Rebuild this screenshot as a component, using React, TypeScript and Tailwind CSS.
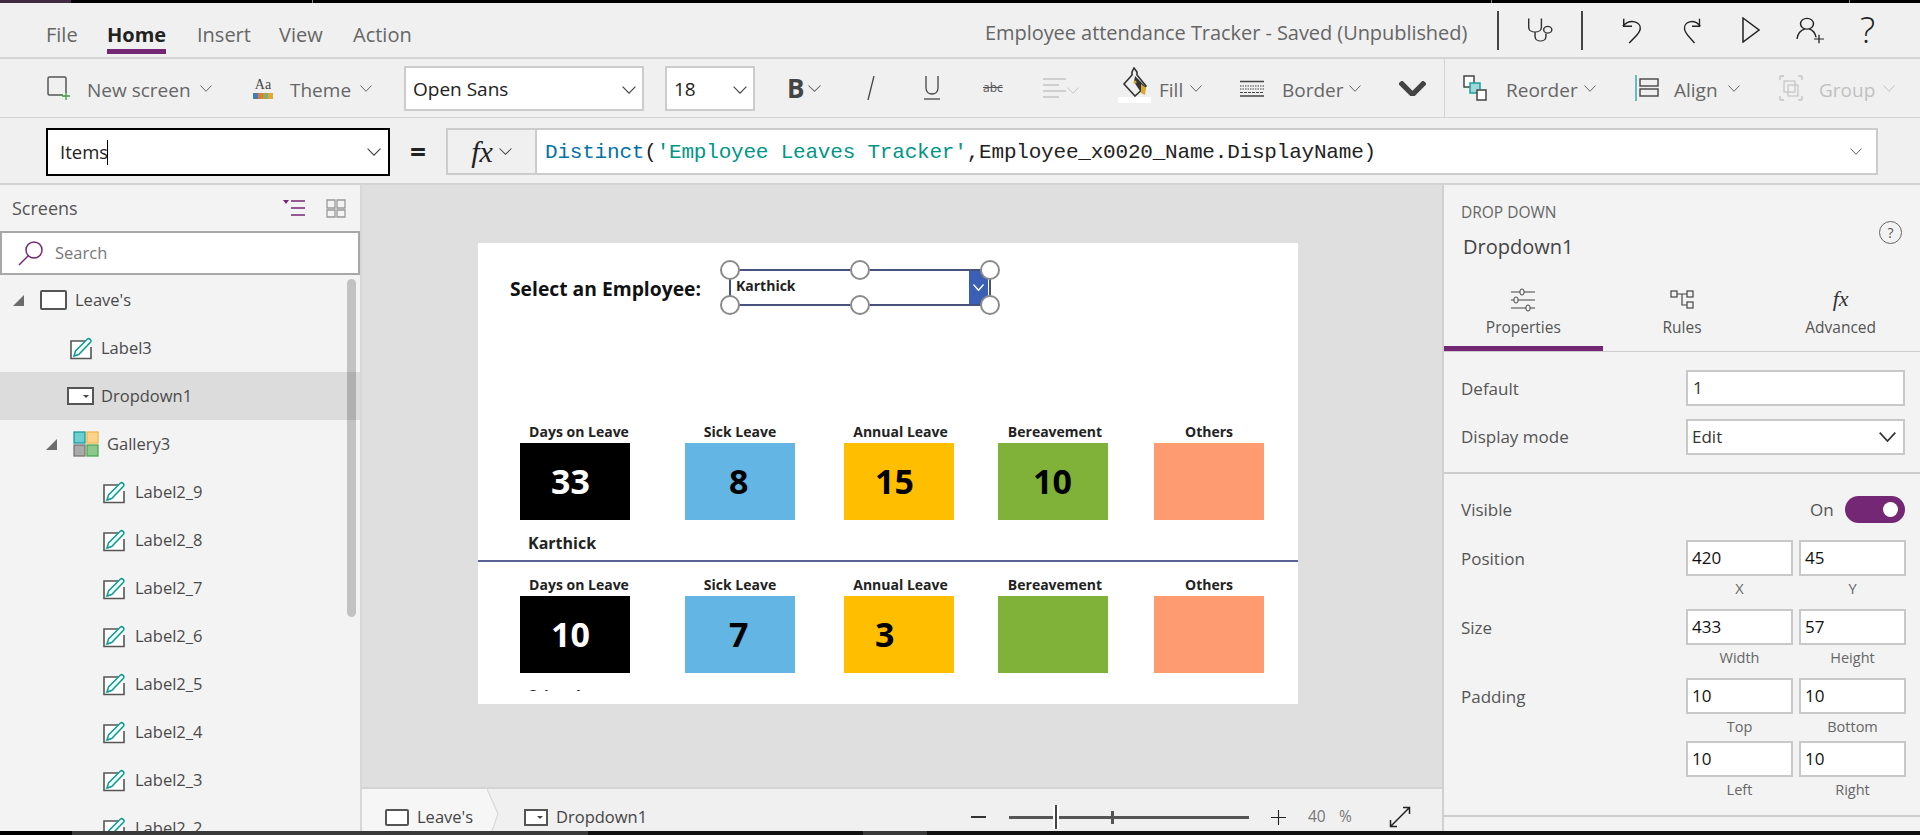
import React from 'react';

const Chev = ({ w = 12, h = 7, c = '#666', sw = 1 }: { w?: number; h?: number; c?: string; sw?: number }) => (
  <svg width={w} height={h} viewBox="0 0 12 7" preserveAspectRatio="none" className="shrink-0">
    <path d="M0.5 0.5 L6 6.3 L11.5 0.5" fill="none" stroke={c} strokeWidth={sw} />
  </svg>
);

const NewScreenIcon = () => (
  <svg width="26" height="26" viewBox="0 0 26 26" className="shrink-0">
    <path d="M20 18 V3.5 a1.5 1.5 0 0 0 -1.5 -1.5 H3.5 A1.5 1.5 0 0 0 2 3.5 V18.5 A1.5 1.5 0 0 0 3.5 20 H17" fill="none" stroke="#555" strokeWidth="1.5" />
    <path d="M20 17 V25 M16 21 H24" stroke="#3c9e3c" strokeWidth="1.3" />
  </svg>
);

const ThemeIcon = () => (
  <div className="flex w-[20px] flex-col items-center shrink-0">
    <span className="font-['Liberation_Serif',serif] text-[14px] leading-[15px] text-[#444]">Aa</span>
    <div className="mt-[1px] flex h-[6px] w-[20px]">
      <span className="flex-1 bg-[#3f7fb5]" />
      <span className="flex-1 bg-[#e07b39]" />
      <span className="flex-1 bg-[#8fae5d]" />
      <span className="flex-1 bg-[#e0a83c]" />
    </div>
  </div>
);

const FillIcon = () => (
  <div className="flex w-[33px] flex-col items-center shrink-0 -mt-[6px]">
    <svg width="26" height="30" viewBox="0 0 26 30">
      <path d="M12 1 L15 5 L15 8 L24 19 L13 29 L2 17 L10 8 L10 5 Z" fill="#f0f0f0" stroke="#333" strokeWidth="1.6" />
      <path d="M13 9 L23 19 L18 24 L12 15 Z" fill="#333" />
      <path d="M19 17 L24 21 L23 28 L19 26 Z" fill="#d7a92c" />
      <circle cx="13" cy="15" r="1.6" fill="#d7a92c" />
    </svg>
    <span className="h-[6px] w-[33px] bg-white" />
  </div>
);

const BorderIcon = () => (
  <svg width="24" height="17" viewBox="0 0 24 17" className="shrink-0">
    <path d="M0 1.5 H24" stroke="#444" strokeWidth="1.5" />
    <path d="M0 6 H24 M0 9 H24" stroke="#444" strokeWidth="1" strokeDasharray="1.5 1" />
    <path d="M0 12.5 H24" stroke="#444" strokeWidth="1" strokeDasharray="3 1" />
    <path d="M0 16 H24" stroke="#444" strokeWidth="1.5" />
  </svg>
);

const ReorderIcon = () => (
  <svg width="24" height="26" viewBox="0 0 24 26" className="shrink-0">
    <rect x="1" y="1" width="10" height="11" fill="#fff" stroke="#444" strokeWidth="1.5" />
    <rect x="7" y="8" width="10" height="10" fill="#9fd8d8" stroke="#1f9e9e" strokeWidth="1.5" />
    <rect x="14" y="15" width="9" height="10" fill="#fff" stroke="#444" strokeWidth="1.5" />
  </svg>
);

const AlignIcon = () => (
  <svg width="24" height="26" viewBox="0 0 24 26" className="shrink-0">
    <path d="M1 0 V26" stroke="#1f9e9e" strokeWidth="1.3" />
    <rect x="5" y="4" width="18" height="7" fill="none" stroke="#444" strokeWidth="1.4" />
    <rect x="5" y="14" width="18" height="7" fill="none" stroke="#444" strokeWidth="1.4" />
  </svg>
);

const GroupIcon = () => (
  <svg width="24" height="26" viewBox="0 0 24 26" className="shrink-0">
    <path d="M1 1 H5 M1 1 V5 M23 1 H19 M23 1 V5 M1 25 H5 M1 25 V21 M23 25 H19 M23 25 V21" stroke="#c4c4c4" strokeWidth="1.4" />
    <rect x="5" y="6" width="11" height="11" fill="none" stroke="#c4c4c4" strokeWidth="1.2" />
    <rect x="9" y="10" width="10" height="11" fill="none" stroke="#c4c4c4" strokeWidth="1.2" />
  </svg>
);

const Stethoscope = () => (
  <svg width="29" height="27" viewBox="0 0 32 36" preserveAspectRatio="none">
    <path d="M3 2 V14 C3 22 17 22 17 14 V2" fill="none" stroke="#333" strokeWidth="1.6" />
    <path d="M10 20 V26 C10 34 22 34 22 26 V22" fill="none" stroke="#333" strokeWidth="1.6" />
    <circle cx="24" cy="17" r="4.5" fill="none" stroke="#333" strokeWidth="1.6" />
  </svg>
);

const Undo = () => (
  <svg width="22" height="27" viewBox="0 0 24 32" preserveAspectRatio="none">
    <path d="M2 11 C10 1 22 6 21 14 C20 21 13 25 9 31" fill="none" stroke="#222" strokeWidth="1.6" />
    <path d="M3 2 V11 H12" fill="none" stroke="#222" strokeWidth="1.6" />
  </svg>
);

const Redo = () => (
  <svg width="20" height="27" viewBox="0 0 24 32" preserveAspectRatio="none">
    <path d="M22 11 C14 1 2 6 3 14 C4 21 11 25 15 31" fill="none" stroke="#222" strokeWidth="1.6" />
    <path d="M21 2 V11 H12" fill="none" stroke="#222" strokeWidth="1.6" />
  </svg>
);

const Play = () => (
  <svg width="18" height="26" viewBox="0 0 18 26">
    <path d="M1 1 L17 13 L1 25 Z" fill="none" stroke="#222" strokeWidth="1.5" />
  </svg>
);

const UserAdd = () => (
  <svg width="28" height="27" viewBox="0 0 28 32" preserveAspectRatio="none">
    <circle cx="11" cy="8" r="6.5" fill="none" stroke="#222" strokeWidth="1.5" />
    <path d="M1 26 C2 18 6 15 9 14 M13 14 C16 15 19 18 20 24" fill="none" stroke="#222" strokeWidth="1.5" />
    <path d="M23 21 V31 M18 26 H28" stroke="#222" strokeWidth="1.3" />
  </svg>
);

const TreeTriangle = () => (
  <svg width="11" height="11" viewBox="0 0 11 11" className="shrink-0">
    <path d="M11 0 V11 H0 Z" fill="#6b6b6b" />
  </svg>
);

const ScreenIcon = ({ w = 27, h = 20 }: { w?: number; h?: number }) => (
  <span className="block shrink-0 rounded-[2px] border-2 border-[#555] bg-white" style={{ width: w, height: h }} />
);

const DropdownIcon = ({ w = 27, h = 18 }: { w?: number; h?: number }) => (
  <span className="flex shrink-0 items-center justify-end border-2 border-[#555] bg-white pr-[3px]" style={{ width: w, height: h }}>
    <span className="h-0 w-0 border-x-[3px] border-t-[3px] border-x-transparent border-t-[#444]" />
  </span>
);

const LabelIcon = () => (
  <svg width="23" height="23" viewBox="0 0 23 23" className="shrink-0">
    <path d="M15 4 H1 V21.5 H21 V10" fill="#fff" stroke="#555" strokeWidth="1.6" />
    <path d="M4 19 L5.5 14 L17.5 2 C19 0.8 22 3.2 20.7 5 L8.7 17.5 Z" fill="#f3fbfb" stroke="#0f9a94" strokeWidth="1.5" />
  </svg>
);

const GalleryIcon = () => (
  <svg width="26" height="26" viewBox="0 0 26 26" className="shrink-0">
    <rect x="1" y="1" width="11" height="11" fill="#6dcfcf" stroke="#1a9a9a" strokeWidth="1.3" />
    <rect x="14" y="1" width="11" height="11" fill="#fbd38a" stroke="#f2b64c" strokeWidth="1.3" />
    <rect x="1" y="14" width="11" height="11" fill="#aaa" stroke="#777" strokeWidth="1.3" />
    <rect x="14" y="14" width="11" height="11" fill="#8cc78c" stroke="#4fa84f" strokeWidth="1.3" />
  </svg>
);

const TreeRow = ({ children, selected }: { children: React.ReactNode; selected?: boolean }) => (
  <div className={`flex h-[48px] items-center whitespace-nowrap text-[16.5px] text-[#4a4a4a] ${selected ? 'bg-[#dcdcdc]' : ''}`}>
    {children}
  </div>
);

const labelRows = ['Label2_9', 'Label2_8', 'Label2_7', 'Label2_6', 'Label2_5', 'Label2_4', 'Label2_3', 'Label2_2'];

function Sidebar() {
  return (
    <aside className="flex w-[360px] shrink-0 flex-col bg-[#f3f3f3]">
      <div className="flex h-[46px] shrink-0 items-center">
        <span className="ml-[12px] w-[270px] text-[18px] text-[#555]">Screens</span>
        <svg width="23" height="18" viewBox="0 0 23 18">
          <path d="M1 1 H7 L4 5 Z" fill="#742774" />
          <path d="M9 2 H23 M9 9 H23 M9 16 H23" stroke="#742774" strokeWidth="1.5" />
        </svg>
        <svg width="20" height="19" viewBox="0 0 20 19" className="ml-[21px]">
          <path d="M1 1 H9 V9 H1 Z M11 1 H19 V9 H11 Z M1 11 H9 V18 H1 Z M11 11 H19 V18 H11 Z" fill="none" stroke="#999" strokeWidth="1.3" />
        </svg>
      </div>
      <div className="flex h-[44px] shrink-0 items-center border-2 border-[#a8a8a8] bg-white">
        <svg width="26" height="26" viewBox="0 0 26 26" className="ml-[16px]">
          <circle cx="16" cy="10" r="8" fill="none" stroke="#742774" strokeWidth="1.5" />
          <path d="M10 16 L1 25" stroke="#742774" strokeWidth="1.5" />
        </svg>
        <span className="ml-[11px] text-[16.5px] text-[#777]">Search</span>
      </div>
      <div className="relative min-h-0 flex-1 overflow-hidden pt-[1px]">
        <TreeRow>
          <span className="ml-[13px]"><TreeTriangle /></span>
          <span className="ml-[16px]"><ScreenIcon /></span>
          <span className="ml-[8px]">Leave's</span>
        </TreeRow>
        <TreeRow>
          <span className="ml-[70px]"><LabelIcon /></span>
          <span className="ml-[8px]">Label3</span>
        </TreeRow>
        <TreeRow selected>
          <span className="ml-[67px]"><DropdownIcon /></span>
          <span className="ml-[7px]">Dropdown1</span>
        </TreeRow>
        <TreeRow>
          <span className="ml-[46px]"><TreeTriangle /></span>
          <span className="ml-[16px]"><GalleryIcon /></span>
          <span className="ml-[8px]">Gallery3</span>
        </TreeRow>
        {labelRows.map(name => (
          <TreeRow key={name}>
            <span className="ml-[103px]"><LabelIcon /></span>
            <span className="ml-[9px]">{name}</span>
          </TreeRow>
        ))}
        {/* scrollbar */}
        <div className="absolute left-[347px] top-[4px] h-[338px] w-[9px] rounded-[5px] bg-black/20" />
      </div>
    </aside>
  );
}

const tiles = [
  { label: 'Days on Leave', bg: 'bg-black text-white', box: 'ml-[42px]', num: 'pl-[31px]', lab: 'pl-[8px]' },
  { label: 'Sick Leave', bg: 'bg-[#63b5e4] text-black', box: 'ml-[55px]', num: 'pl-[44px]', lab: '' },
  { label: 'Annual Leave', bg: 'bg-[#ffbe00] text-black', box: 'ml-[49px]', num: 'pl-[31px]', lab: 'pl-[3px]' },
  { label: 'Bereavement', bg: 'bg-[#80b139] text-black', box: 'ml-[44px]', num: 'pl-[35px]', lab: 'pl-[4px]' },
  { label: 'Others', bg: 'bg-[#fe9b70] text-black', box: 'ml-[46px]', num: 'pl-[37px]', lab: '' },
];

function GalleryRow({ values, name }: { values: string[]; name: string }) {
  return (
    <div className="h-[153px] shrink-0">
      <div className="flex">
        {tiles.map((t, i) => (
          <div key={t.label} className={`w-[110px] ${t.box}`}>
            <div className={`h-[21px] whitespace-nowrap text-center text-[14px] font-bold leading-[19px] text-[#222] ${t.lab}`}>{t.label}</div>
            <div className={`flex h-[77px] items-center text-[34px] font-bold ${t.bg} ${t.num}`}>{values[i]}</div>
          </div>
        ))}
      </div>
      <div className="ml-[50px] mt-[11px] h-[24px] text-[16px] font-bold leading-[24px] text-[#222]">{name}</div>
      <div className="mt-[5px] h-[1.5px] bg-[#5a6396]" />
    </div>
  );
}

const handlePositions = [
  'left-[-11px] top-[-11px]',
  'left-[119px] top-[-11px]',
  'left-[249px] top-[-11px]',
  'left-[-11px] top-[24px]',
  'left-[119px] top-[24px]',
  'left-[249px] top-[24px]',
];

function Artboard() {
  return (
    <div className="ml-[116px] mt-[58px] h-[461px] w-[820px] shrink-0 bg-white">
      <div className="flex pt-[26px]">
        <div className="ml-[32px] flex h-[37px] w-[219px] items-center whitespace-nowrap pt-[4px] text-[19.3px] font-bold text-[#111]">Select an Employee:</div>
        <div className="relative flex h-[37px] w-[262px] items-stretch border-2 border-[#47527e]">
          <span className="ml-[5px] flex-1 text-[14px] font-bold leading-[30px] text-[#222]">Karthick</span>
          <span className="mr-[1px] flex w-[19px] items-center justify-center bg-[#3a5fb5]">
            <Chev w={11} h={7} c="#fff" sw={1.5} />
          </span>
          {handlePositions.map(p => (
            <span key={p} className={`absolute h-[20px] w-[20px] rounded-full border-2 border-[#8a8a8a] bg-white ${p}`} />
          ))}
        </div>
      </div>
      <div className="mt-[116px] flex h-[269px] flex-col overflow-hidden">
        <GalleryRow values={['33', '8', '15', '10', '']} name="Karthick" />
        <GalleryRow values={['10', '7', '3', '', '']} name="Srinath" />
      </div>
    </div>
  );
}

function StatusBar() {
  return (
    <div className="flex h-[44px] shrink-0 items-center border-t-2 border-[#d4d4d4] bg-[#f0f0f0] text-[16.5px] text-[#444]">
      <div className="flex h-full w-[125px] items-center bg-[#f6f6f6] pt-[14px]">
        <span className="ml-[23px]"><ScreenIcon w={24} h={17} /></span>
        <span className="ml-[8px] whitespace-nowrap">Leave's</span>
      </div>
      <svg width="12" height="42" viewBox="0 0 12 44" preserveAspectRatio="none" className="shrink-0">
        <path d="M0 0 L11 26 L5 44 H0 Z" fill="#f6f6f6" />
        <path d="M0 0 L11 26 L5 44" fill="none" stroke="#d8d8d8" strokeWidth="1.2" />
      </svg>
      <div className="flex h-full items-center pt-[14px]">
        <span className="ml-[25px]"><DropdownIcon w={24} h={17} /></span>
        <span className="ml-[8px] w-[92px] whitespace-nowrap">Dropdown1</span>
        <span className="ml-[323px] h-[1.5px] w-[15px] bg-[#333]" />
        <div className="relative ml-[23px] h-[3px] w-[240px] bg-[#555]">
          <span className="absolute left-[44px] top-[-11px] h-[24px] w-[6px] border-x-2 border-white bg-[#444]" />
          <span className="absolute left-[102px] top-[-5px] h-[13px] w-[3px] bg-[#555]" />
        </div>
        <svg width="15" height="15" viewBox="0 0 15 15" className="ml-[22px]">
          <path d="M7.5 0 V15 M0 7.5 H15" stroke="#222" strokeWidth="1.1" />
        </svg>
        <span className="ml-[22px] w-[31px] text-[15.5px] text-[#777]">40</span>
        <span className="w-[50px] text-[15.5px] text-[#777]">%</span>
        <svg width="22" height="22" viewBox="0 0 22 22" className="shrink-0">
          <path d="M2 20 L20 2 M14 1.5 H20.5 V8 M1.5 14 V20.5 H8" fill="none" stroke="#222" strokeWidth="1.5" />
        </svg>
      </div>
    </div>
  );
}

const Field = ({ value, caption }: { value: string; caption?: string }) => (
  <div className="w-[107px]">
    <div className="flex h-[36px] items-center border-2 border-[#c8c8c8] bg-white pl-[4px] text-[17px] text-[#111]">{value}</div>
    {caption && <div className="text-center text-[14.5px] leading-[26px] text-[#666]">{caption}</div>}
  </div>
);

const PropRow = ({ label, children, cls }: { label: string; children: React.ReactNode; cls: string }) => (
  <div className={`flex ${cls}`}>
    <span className="ml-[17px] h-[36px] w-[225px] text-[17px] leading-[38px] text-[#555]">{label}</span>
    <div className="flex gap-[6px]">{children}</div>
  </div>
);

function RightPanel() {
  return (
    <aside className="flex w-[478px] shrink-0 flex-col border-l-2 border-[#d0d0d0] bg-[#f3f3f3]">
      <div className="flex h-[95px] shrink-0 justify-between">
        <div className="ml-[17px] pt-[17px]">
          <div className="text-[15.5px] leading-[20px] text-[#666]">DROP DOWN</div>
          <div className="ml-[2px] mt-[11px] text-[20px] leading-[28px] text-[#444]">Dropdown1</div>
        </div>
        <span className="mr-[18px] mt-[36px] flex h-[23px] w-[23px] items-center justify-center rounded-full border-[1.5px] border-[#666] text-[14px] text-[#555]">?</span>
      </div>
      <div className="flex h-[72px] shrink-0 border-b border-[#ccc] text-[15.5px] text-[#555]">
        <div className="flex w-[159px] flex-col items-center border-b-[5px] border-[#742774]">
          <svg width="24" height="24" viewBox="0 0 24 24" className="mt-[8px]">
            <path d="M0 4 H9 M13 4 H24 M0 12 H3 M7 12 H24 M0 20 H15 M19 20 H24" stroke="#444" strokeWidth="1.2" />
            <rect x="9" y="1" width="4" height="6" rx="2" fill="none" stroke="#444" />
            <rect x="3" y="9" width="4" height="6" rx="2" fill="none" stroke="#444" />
            <rect x="15" y="17" width="4" height="6" rx="2" fill="none" stroke="#444" />
          </svg>
          <span className="mt-[4px] leading-[22px]">Properties</span>
        </div>
        <div className="flex w-[159px] flex-col items-center">
          <svg width="24" height="20" viewBox="0 0 24 20" className="mt-[10px]">
            <rect x="1" y="1" width="6" height="6" fill="none" stroke="#444" strokeWidth="1.2" />
            <rect x="17" y="1" width="6" height="6" fill="none" stroke="#444" strokeWidth="1.2" />
            <rect x="17" y="12" width="6" height="6" fill="none" stroke="#444" strokeWidth="1.2" />
            <path d="M7 4 H17 M12 4 V15 H17" fill="none" stroke="#444" strokeWidth="1.2" />
          </svg>
          <span className="mt-[6px] leading-[22px]">Rules</span>
        </div>
        <div className="flex w-[159px] flex-col items-center">
          <span className="mt-[5px] h-[27px] font-['Liberation_Serif',serif] text-[22px] italic leading-[27px] text-[#333]">fx</span>
          <span className="mt-[4px] leading-[22px]">Advanced</span>
        </div>
      </div>
      <div className="shrink-0 border-b-2 border-[#ccc] pb-[17px] pt-[18px]">
        <div className="flex">
          <span className="ml-[17px] h-[36px] w-[225px] text-[17px] leading-[38px] text-[#555]">Default</span>
          <div className="flex h-[36px] w-[219px] items-center border-2 border-[#c8c8c8] bg-white pl-[5px] text-[17px] text-[#333]">1</div>
        </div>
        <div className="mt-[13px] flex">
          <span className="ml-[17px] h-[36px] w-[225px] text-[17px] leading-[36px] text-[#555]">Display mode</span>
          <div className="flex h-[36px] w-[219px] items-center justify-between border-2 border-[#c8c8c8] bg-white pl-[4px] pr-[7px] text-[17px] text-[#333]">
            Edit
            <Chev w={17} h={10} c="#333" sw={1.2} />
          </div>
        </div>
      </div>
      <div className="flex-1 border-b-2 border-[#ccc] pt-[22px]">
        <div className="flex h-[27px] items-center">
          <span className="ml-[17px] w-[349px] text-[17px] text-[#555]">Visible</span>
          <span className="w-[35px] text-[17px] text-[#555]">On</span>
          <span className="flex h-[27px] w-[60px] items-center justify-end rounded-full bg-[#742774] pr-[7px]">
            <span className="h-[15px] w-[15px] rounded-full bg-white" />
          </span>
        </div>
        <PropRow label="Position" cls="mt-[17px] h-[69px]">
          <Field value="420" caption="X" />
          <Field value="45" caption="Y" />
        </PropRow>
        <PropRow label="Size" cls="h-[69px]">
          <Field value="433" caption="Width" />
          <Field value="57" caption="Height" />
        </PropRow>
        <PropRow label="Padding" cls="h-[63px]">
          <Field value="10" caption="Top" />
          <Field value="10" caption="Bottom" />
        </PropRow>
        <PropRow label="" cls="h-[63px]">
          <Field value="10" caption="Left" />
          <Field value="10" caption="Right" />
        </PropRow>
      </div>
      <div className="h-[14px] shrink-0" />
    </aside>
  );
}

function Ribbon() {
  return (
    <div className="flex h-[59px] shrink-0 items-center whitespace-nowrap border-b border-[#d4d4d4] text-[19px] text-[#666]">
      <span className="ml-[46px]"><NewScreenIcon /></span>
      <span className="ml-[15px] mt-[4px] w-[103px]">New screen</span>
      <span className="ml-[10px]"><Chev /></span>
      <span className="ml-[41px]"><ThemeIcon /></span>
      <span className="ml-[17px] mt-[4px] w-[61px]">Theme</span>
      <span className="ml-[9px]"><Chev /></span>
      <div className="ml-[32px] flex h-[45px] w-[240px] items-center justify-between border-2 border-[#ccc] bg-white pl-[7px] pr-[6px] pt-[3px] text-[#222]">
        Open Sans
        <Chev w={14} h={8} c="#444" />
      </div>
      <div className="ml-[21px] flex h-[45px] w-[90px] items-center justify-between border-2 border-[#ccc] bg-white pl-[7px] pr-[6px] pt-[3px] text-[#222]">
        18
        <Chev w={14} h={8} c="#444" />
      </div>
      <span className="ml-[32px] w-[16px] text-[26px] font-bold leading-none text-[#444]">B</span>
      <span className="ml-[5px]"><Chev w={13} /></span>
      <svg width="8" height="24" viewBox="0 0 8 24" className="ml-[46px]">
        <path d="M7 0 L1 24" stroke="#444" strokeWidth="1.3" />
      </svg>
      <span className="ml-[49px] flex w-[16px] flex-col items-center">
        <svg width="16" height="24" viewBox="0 0 16 24">
          <path d="M2 0 V12 C2 20 14 20 14 12 V0" fill="none" stroke="#444" strokeWidth="1.3" />
          <path d="M0 23 H16" stroke="#444" strokeWidth="1.3" />
        </svg>
      </span>
      <span className="ml-[43px] w-[22px] text-[12px] text-[#555] line-through">abc</span>
      <svg width="23" height="20" viewBox="0 0 23 20" className="ml-[38px]">
        <path d="M0 1 H23 M0 7 H16 M0 13 H23 M0 19 H16" stroke="#c4c4c4" strokeWidth="1.3" />
      </svg>
      <span className="ml-[1px] mt-[4px]"><Chev c="#c4c4c4" /></span>
      <span className="ml-[39px]"><FillIcon /></span>
      <span className="ml-[8px] mt-[4px] w-[23px]">Fill</span>
      <span className="ml-[8px]"><Chev /></span>
      <span className="ml-[38px]"><BorderIcon /></span>
      <span className="ml-[18px] mt-[4px] w-[59px]">Border</span>
      <span className="ml-[8px]"><Chev /></span>
      <span className="ml-[38px]"><Chev w={27} h={15} c="#444" sw={2.4} /></span>
      <span className="ml-[18px] h-full w-[1px] bg-[#d4d4d4]" />
      <span className="ml-[18px]"><ReorderIcon /></span>
      <span className="ml-[19px] mt-[4px] w-[71px]">Reorder</span>
      <span className="ml-[7px]"><Chev /></span>
      <span className="ml-[39px]"><AlignIcon /></span>
      <span className="ml-[15px] mt-[4px] w-[46px]">Align</span>
      <span className="ml-[8px]"><Chev /></span>
      <span className="ml-[39px]"><GroupIcon /></span>
      <span className="ml-[16px] mt-[4px] w-[55px] text-[#c0c0c0]">Group</span>
      <span className="ml-[9px]"><Chev c="#c0c0c0" /></span>
    </div>
  );
}

export default function App() {
  return (
    <div className="flex h-[835px] w-[1920px] flex-col overflow-hidden bg-[#f0f0f0] font-['Open_Sans',sans-serif]">
      {/* window strip */}
      <div className="flex h-[3px] shrink-0 bg-black">
        <span className="w-[71px] bg-[#3f2a42]" />
        <span className="ml-[241px] w-[1px] bg-[#888]" />
        <span className="ml-[1178px] w-[1px] bg-[#888]" />
        <span className="ml-[357px] w-[1px] bg-[#888]" />
      </div>

      {/* menu + title */}
      <header className="flex h-[56px] shrink-0 items-center whitespace-nowrap border-b-2 border-[#d4d4d4] text-[20px] leading-[24px] text-[#666]">
        <span className="ml-[46px] mt-[10px] w-[61px]">File</span>
        <span className="relative mt-[10px] w-[90px] font-bold text-[#222]">
          Home
          <span className="absolute left-0 top-[26px] h-[5px] w-[59px] bg-[#742774]" />
        </span>
        <span className="mt-[10px] w-[82px]">Insert</span>
        <span className="mt-[10px] w-[74px]">View</span>
        <span className="mt-[10px] w-[632px]">Action</span>
        <span className="mt-[6px] w-[512px] tracking-[-0.06px]">Employee attendance Tracker - Saved (Unpublished)</span>
        <span className="h-[39px] w-[2px] bg-[#444]" />
        <span className="ml-[27px]"><Stethoscope /></span>
        <span className="ml-[26px] h-[39px] w-[2px] bg-[#444]" />
        <span className="ml-[38px]"><Undo /></span>
        <span className="ml-[39px]"><Redo /></span>
        <span className="ml-[40px]"><Play /></span>
        <span className="ml-[36px]"><UserAdd /></span>
        <span className="ml-[36px] text-[36px] font-light leading-none text-[#222]">?</span>
      </header>

      <Ribbon />

      {/* formula bar */}
      <div className="flex h-[67px] shrink-0 items-start border-b-2 border-[#d4d4d4] pt-[10px]">
        <div className="ml-[46px] flex h-[48px] w-[344px] items-center justify-between border-[2.5px] border-black bg-white pl-[12px] pr-[7px] text-[18.5px] text-[#222]">
          <span className="flex items-center">Items<span className="ml-[-1px] h-[25px] w-[1px] bg-black" /></span>
          <Chev w={14} h={8} c="#444" />
        </div>
        <span className="ml-[20px] mt-[5px] w-[36px] text-[28px] font-bold leading-[36px] text-[#222]">=</span>
        <div className="flex h-[47px] w-[91px] items-center justify-center gap-[6px] border-2 border-[#ccc] bg-[#f0f0f0] font-['Liberation_Serif',serif] text-[30px] italic text-[#222]">
          fx
          <Chev w={13} h={7} c="#444" />
        </div>
        <div className="flex h-[47px] w-[1341px] items-center justify-between border-2 border-l-0 border-[#ccc] bg-white pl-[8px] pr-[14px] font-['Liberation_Mono',monospace] text-[21px] tracking-[-0.2px] text-[#222]">
          <span className="whitespace-pre pt-[2px]">
            <span className="text-[#0072a8]">Distinct</span>(<span className="text-[#009688]">'Employee Leaves Tracker'</span>,Employee_x0020_Name.DisplayName)
          </span>
          <Chev w={12} h={7} c="#666" />
        </div>
      </div>

      {/* main */}
      <div className="flex min-h-0 flex-1">
        <Sidebar />
        <div className="w-[2px] shrink-0 bg-[#d8d8d8]" />
        <main className="flex w-[1080px] shrink-0 flex-col bg-[#dfdfdf]">
          <div className="min-h-0 flex-1"><Artboard /></div>
          <StatusBar />
        </main>
        <RightPanel />
      </div>

      {/* bottom strip */}
      <div className="flex h-[4px] shrink-0 bg-[#111]">
        <span className="w-[72px] bg-black" />
        <span className="w-[516px] bg-[#3a3a3a]" />
        <span className="ml-[275px] w-[64px] bg-[#3a3a3a]" />
      </div>
    </div>
  );
}
